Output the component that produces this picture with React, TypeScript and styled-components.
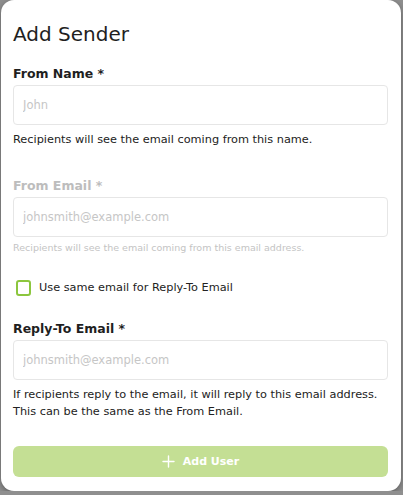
import React from 'react';
import styled, { createGlobalStyle } from 'styled-components';

const GlobalStyle = createGlobalStyle`
  html, body {
    margin: 0;
    padding: 0;
    background: #8f8f8f;
  }
  body {
    font-family: 'DejaVu Sans', 'Liberation Sans', sans-serif;
  }
`;

const Modal = styled.div`
  box-sizing: border-box;
  width: 400px;
  height: 491px;
  margin-left: 1px;
  background: #ffffff;
  border-radius: 13px;
  box-shadow: 0 2px 6px rgba(0, 0, 0, 0.35);
  padding: 22px 13px 14px 12px;
  display: flex;
  flex-direction: column;
`;

const Title = styled.h2`
  margin: 0;
  font-size: 20px;
  line-height: 24px;
  font-weight: 400;
  color: #1f1f1f;
`;

const Field = styled.div<{ $top: number }>`
  display: flex;
  flex-direction: column;
  margin-top: ${(p) => p.$top}px;
`;

const Label = styled.label<{ $disabled?: boolean }>`
  font-size: 12.5px;
  line-height: 14px;
  font-weight: 700;
  color: ${(p) => (p.$disabled ? '#bdbdbd' : '#1f1f1f')};
  margin-bottom: 4px;
`;

const Input = styled.input`
  box-sizing: border-box;
  width: 100%;
  height: 40px;
  border: 1px solid #e6e6e6;
  border-radius: 4px;
  padding: 0 9px;
  font-family: inherit;
  font-size: 11.5px;
  color: #333;
  outline: none;
  background: #fff;
  &::placeholder {
    color: #c6c6c6;
  }
`;

const Help = styled.p<{ $muted?: boolean }>`
  margin: ${(p) => (p.$muted ? '4px' : '6px')} 0 0;
  font-size: ${(p) => (p.$muted ? '9.5px' : '11.3px')};
  line-height: ${(p) => (p.$muted ? '14px' : '17px')};
  color: ${(p) => (p.$muted ? '#c4c4c4' : '#222222')};
`;

const CheckRow = styled.label`
  display: flex;
  align-items: center;
  gap: 8px;
  margin-top: 25px;
  padding-left: 3px;
  font-size: 11.3px;
  line-height: 16px;
  color: #222;
`;

const Box = styled.span`
  box-sizing: border-box;
  width: 15px;
  height: 16px;
  border: 2px solid #8cc63e;
  border-radius: 3px;
  background: #fff;
`;

const Submit = styled.button`
  margin-top: auto;
  height: 31px;
  width: 100%;
  border: none;
  border-radius: 6px;
  background: #c4df94;
  color: #ffffff;
  font-family: inherit;
  font-size: 11px;
  font-weight: 700;
  display: flex;
  align-items: center;
  justify-content: center;
  gap: 8px;
  cursor: default;
`;

const PlusIcon = () => (
  <svg width="13" height="13" viewBox="0 0 13 13" fill="none">
    <path d="M6.5 1v11M1 6.5h11" stroke="#ffffff" strokeWidth="1.4" strokeLinecap="round" />
  </svg>
);

const App = () => {
  return (
    <>
      <GlobalStyle />
      <Modal>
        <Title>Add Sender</Title>
        <Field $top={21}>
          <Label>From Name *</Label>
          <Input placeholder="John" />
          <Help>Recipients will see the email coming from this name.</Help>
        </Field>
        <Field $top={31}>
          <Label $disabled>From Email *</Label>
          <Input placeholder="johnsmith@example.com" disabled />
          <Help $muted>Recipients will see the email coming from this email address.</Help>
        </Field>
        <CheckRow>
          <Box />
          Use same email for Reply-To Email
        </CheckRow>
        <Field $top={26}>
          <Label>Reply-To Email *</Label>
          <Input placeholder="johnsmith@example.com" />
          <Help>
            If recipients reply to the email, it will reply to this email address.
            <br />
            This can be the same as the From Email.
          </Help>
        </Field>
        <Submit type="button">
          <PlusIcon />
          Add User
        </Submit>
      </Modal>
    </>
  );
};

export default App;
